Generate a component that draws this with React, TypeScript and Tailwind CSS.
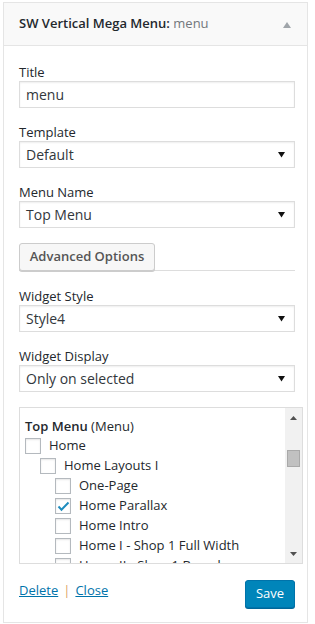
import React from 'react'

const MENU_ITEMS = [
  { label: 'Home', level: 0, checked: false },
  { label: 'Home Layouts I', level: 1, checked: false },
  { label: 'One-Page', level: 2, checked: false },
  { label: 'Home Parallax', level: 2, checked: true },
  { label: 'Home Intro', level: 2, checked: false },
  { label: 'Home I - Shop 1 Full Width', level: 2, checked: false },
  { label: 'Home II - Shop 1 Boxed', level: 2, checked: false },
]

const INDENT = ['pl-0', 'pl-[15px]', 'pl-[30px]']

function Caret() {
  return (
    <svg width="7" height="7" viewBox="0 0 7 7" className="shrink-0">
      <path d="M0 1h7L3.5 6.5z" fill="#111" />
    </svg>
  )
}

function Field({ label, value, select, gap = 'mb-[15px]' }: { label: string; value: string; select?: boolean; gap?: string }) {
  return (
    <div className={gap}>
      <div className="h-[18px] leading-[18px] text-[13px] text-[#23282d]">{label}</div>
      <div className="w-[276px] h-[27px] flex items-center justify-between pl-[6px] pr-[9px] border border-[#ddd] bg-white shadow-[inset_0_1px_2px_rgba(0,0,0,0.07)]">
        <span className="text-[14px] text-[#32373c]">{value}</span>
        {select && <Caret />}
      </div>
    </div>
  )
}

function Checkbox({ checked }: { checked: boolean }) {
  return (
    <span className="w-[16px] h-[16px] shrink-0 border border-[#b4b9be] bg-white shadow-[inset_0_1px_2px_rgba(0,0,0,0.1)] flex items-center justify-center">
      {checked && (
        <svg width="13" height="11" viewBox="0 0 13 11">
          <path d="M1.5 5.5l3 3.2L11.5 1.5" fill="none" stroke="#1e8cbe" strokeWidth="2" />
        </svg>
      )}
    </span>
  )
}

export default function App() {
  return (
    <div className="min-h-screen bg-white pt-[2px] pl-[3px]" style={{ fontFamily: '"Open Sans", "Noto Sans", sans-serif' }}>
      <div className="w-[305px] border border-[#e5e5e5] bg-white">

        {/* ── Header ── */}
        <div className="h-[43px] flex items-center justify-between pl-[15px] pr-[16px] bg-[#f9f9f9] border-b border-[#e5e5e5]">
          <div className="text-[13px] text-[#23282d]">
            <span className="font-semibold">SW Vertical Mega Menu:</span>{' '}
            <span className="text-[#72777c]">menu</span>
          </div>
          <svg width="8" height="6" viewBox="0 0 8 6" className="mt-[1px]">
            <path d="M0 6L4 0l4 6z" fill="#a0a5aa" />
          </svg>
        </div>

        {/* ── Body ── */}
        <div className="pt-[17px] pl-[15px] pr-[4px] pb-[14px]">
          <Field label="Title" value="menu" />
          <Field label="Template" value="Default" select />
          <Field label="Menu Name" value="Top Menu" select gap="mb-[15px]" />

          <div className="w-[276px] border-b border-[#ddd] mb-[16px]">
            <button className="h-[28px] w-[136px] -mb-[1px] flex items-center justify-center rounded-[3px] border border-[#ccc] bg-[#f7f7f7] shadow-[0_1px_0_#ccc] text-[13px] font-semibold text-[#555]">
              Advanced Options
            </button>
          </div>

          <Field label="Widget Style" value="Style4" select />
          <Field label="Widget Display" value="Only on selected" select gap="mb-[15px]" />

          {/* ── Menu checklist ── */}
          <div className="w-[284px] h-[157px] flex border border-[#ddd] bg-white overflow-hidden">
            <div className="flex-1 min-w-0 pt-[8px] pl-[5px] overflow-hidden">
              <div className="h-[20px] leading-[20px] text-[13px] text-[#23282d] whitespace-nowrap">
                <span className="font-semibold">Top Menu</span> (Menu)
              </div>
              {MENU_ITEMS.map(item => (
                <div key={item.label} className={`h-[20px] flex items-center gap-[8px] ${INDENT[item.level]}`}>
                  <Checkbox checked={item.checked} />
                  <span className="text-[13px] text-[#23282d] whitespace-nowrap">{item.label}</span>
                </div>
              ))}
            </div>
            <div className="w-[17px] shrink-0 bg-[#f1f1f1] flex flex-col items-center">
              <svg width="7" height="4" viewBox="0 0 7 4" className="mt-[8px]">
                <path d="M0 4L3.5 0 7 4z" fill="#505050" />
              </svg>
              <div className="w-[13px] h-[17px] mt-[30px] bg-[#c1c1c1] border border-[#a9a9a9]" />
              <div className="flex-1" />
              <svg width="7" height="4" viewBox="0 0 7 4" className="mb-[7px]">
                <path d="M0 0h7L3.5 4z" fill="#505050" />
              </svg>
            </div>
          </div>

          {/* ── Footer ── */}
          <div className="w-[276px] mt-[16px] flex items-start justify-between">
            <div className="mt-[1px] text-[13px] leading-[18px]">
              <a className="text-[#0073aa] underline">Delete</a>
              <span className="text-[#dba467] mx-[5px]">|</span>
              <a className="text-[#0073aa] underline">Close</a>
            </div>
            <button className="h-[28px] w-[50px] flex items-center justify-center rounded-[3px] border border-[#0073aa] bg-[#0085ba] shadow-[0_1px_0_#006799] text-[13px] text-white">
              Save
            </button>
          </div>
        </div>
      </div>
    </div>
  )
}
